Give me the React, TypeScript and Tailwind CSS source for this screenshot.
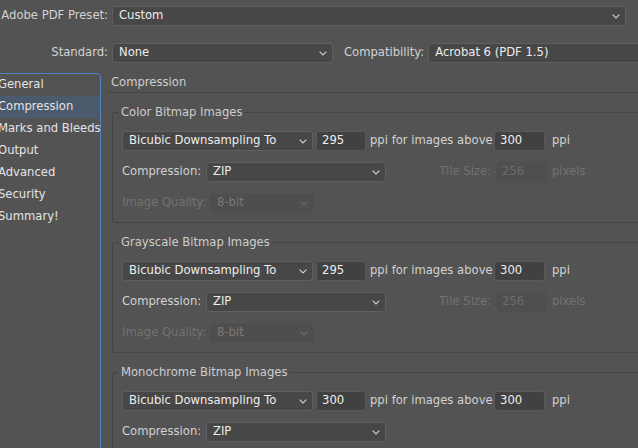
import React from 'react';

function Chevron({ disabled }: { disabled?: boolean }) {
  return (
    <svg width="8" height="5" viewBox="0 0 8 5" className="shrink-0">
      <path
        d="M0.6 0.6 L4 4 L7.4 0.6"
        fill="none"
        stroke={disabled ? '#6a6a6a' : '#d2d2d2'}
        strokeWidth="1.1"
      />
    </svg>
  );
}

function Select({
  value,
  className = '',
  disabled,
}: {
  value: string;
  className?: string;
  disabled?: boolean;
}) {
  return (
    <div
      className={`h-[20px] shrink-0 flex items-center justify-between pl-[6px] pr-[5px] rounded-[3px] border ${
        disabled
          ? 'bg-[#4e4e4e] border-[#505050] text-[#7a7a7a]'
          : 'bg-[#474747] border-[#5f5f5f] text-[#ededed]'
      } ${className}`}
    >
      <span className="whitespace-nowrap">{value}</span>
      <Chevron disabled={disabled} />
    </div>
  );
}

function Field({
  value,
  className = '',
  disabled,
}: {
  value: string;
  className?: string;
  disabled?: boolean;
}) {
  return (
    <div
      className={`h-[20px] shrink-0 flex items-center pl-[5px] rounded-[3px] border ${
        disabled
          ? 'bg-[#4f4f4f] border-[#4f4f4f] text-[#6c6c6c]'
          : 'bg-[#414141] border-[#5a5a5a] text-[#f0f0f0]'
      } ${className}`}
    >
      {value}
    </div>
  );
}

function BitmapGroup({
  title,
  ppi,
  showQuality = true,
}: {
  title: string;
  ppi: string;
  showQuality?: boolean;
}) {
  return (
    <fieldset className="ml-[4px] w-[560px] border border-[#454545] rounded-[3px] pl-[9px] pt-[11px] pb-[9px] flex flex-col gap-[11px]">
      <legend className="-ml-[3px] px-[2px] leading-[16px] text-[#cdcdcd]">{title}</legend>

      <div className="flex items-center">
        <Select value="Bicubic Downsampling To" className="w-[191px]" />
        <Field value={ppi} className="w-[50px] ml-[3px]" />
        <span className="w-[124px] shrink-0 ml-[4px] whitespace-nowrap text-[#d2d2d2]">ppi for images above</span>
        <Field value="300" className="w-[51px]" />
        <span className="ml-[7px] shrink-0 text-[#d2d2d2]">ppi</span>
      </div>

      <div className="flex items-center">
        <span className="w-[84px] shrink-0 whitespace-nowrap text-[#d2d2d2]">Compression:</span>
        <Select value="ZIP" className="w-[180px]" />
        {showQuality && (
          <>
            <span className="w-[105px] shrink-0 text-right whitespace-nowrap text-[#727272]">Tile Size:</span>
            <Field value="256" disabled className="w-[51px] ml-[5px]" />
            <span className="ml-[5px] shrink-0 text-[#727272]">pixels</span>
          </>
        )}
      </div>

      {showQuality && (
        <div className="flex items-center">
          <span className="w-[88px] shrink-0 whitespace-nowrap text-[#727272]">Image Quality:</span>
          <Select value="8-bit" disabled className="w-[104px]" />
        </div>
      )}
    </fieldset>
  );
}

const sections = [
  'General',
  'Compression',
  'Marks and Bleeds',
  'Output',
  'Advanced',
  'Security',
  'Summary!',
];

export default function App() {
  return (
    <div className="w-[638px] h-[448px] overflow-hidden bg-[#535353] text-[11.6px] font-['DejaVu_Sans',sans-serif] text-[#d2d2d2] pt-[6px]">
      {/* Preset */}
      <div className="flex items-center">
        <span className="w-[108px] shrink-0 text-right whitespace-nowrap">Adobe PDF Preset:</span>
        <Select value="Custom" className="w-[514px] ml-[4px]" />
      </div>

      {/* Standard / Compatibility */}
      <div className="flex items-center mt-[17px]">
        <span className="w-[108px] shrink-0 text-right">Standard:</span>
        <Select value="None" className="w-[221px] ml-[4px]" />
        <span className="ml-[11px] shrink-0 whitespace-nowrap">Compatibility:</span>
        <Select value="Acrobat 6 (PDF 1.5)" className="w-[240px] ml-[4px]" />
      </div>

      <div className="flex mt-[10px] h-[380px]">
        {/* Section list */}
        <div className="-ml-[8px] w-[109px] shrink-0 border border-[#4f82c2] rounded-tr-[4px]">
          {sections.map((s) => (
            <div
              key={s}
              className={`h-[22px] flex items-center pl-[5px] whitespace-nowrap text-[#e4e4e4] ${
                s === 'Compression' ? 'bg-[#4b5a6c]' : ''
              }`}
            >
              {s}
            </div>
          ))}
        </div>

        {/* Compression panel */}
        <div className="flex-1 min-w-0 overflow-hidden pl-[7px]">
          <div className="h-[20px] flex items-center pl-[3px] border-b border-[#474747] text-[#cfcfcf]">
            Compression
          </div>
          <div className="mt-[11px] flex flex-col gap-[11px]">
            <BitmapGroup title="Color Bitmap Images" ppi="295" />
            <BitmapGroup title="Grayscale Bitmap Images" ppi="295" />
            <BitmapGroup title="Monochrome Bitmap Images" ppi="300" showQuality={false} />
          </div>
        </div>
      </div>
    </div>
  );
}
